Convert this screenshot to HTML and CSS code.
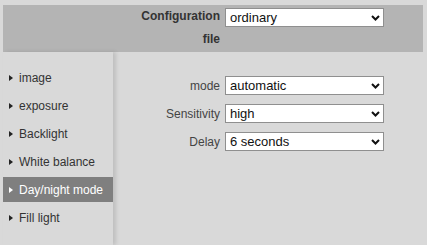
FILE: index.html
```html
<!DOCTYPE html>
<html lang="en">
<head>
  <meta charset="UTF-8" />
  <title>Day/night mode</title>
  <link rel="stylesheet" href="styles.css">
</head>
<body>
  <div class="config-bar">
    <label class="config-label">Configuration file</label>
    <span class="select-wrap top-select">
      <select>
        <option>ordinary</option>
      </select>
      <svg class="chev" width="9" height="6" viewBox="0 0 9 6"><path d="M1 1 L4.5 4.5 L8 1" fill="none" stroke="#111" stroke-width="2"/></svg>
    </span>
  </div>

  <div class="content">
    <ul class="side-menu">
      <li><span class="tri"></span>image</li>
      <li><span class="tri"></span>exposure</li>
      <li><span class="tri"></span>Backlight</li>
      <li><span class="tri"></span>White balance</li>
      <li class="active"><span class="tri"></span>Day/night mode</li>
      <li><span class="tri"></span>Fill light</li>
    </ul>

    <div class="panel">
      <div class="form-grid">
        <label>mode</label>
        <span class="select-wrap">
          <select><option>automatic</option></select>
          <svg class="chev" width="9" height="6" viewBox="0 0 9 6"><path d="M1 1 L4.5 4.5 L8 1" fill="none" stroke="#111" stroke-width="2"/></svg>
        </span>

        <label>Sensitivity</label>
        <span class="select-wrap">
          <select><option>high</option></select>
          <svg class="chev" width="9" height="6" viewBox="0 0 9 6"><path d="M1 1 L4.5 4.5 L8 1" fill="none" stroke="#111" stroke-width="2"/></svg>
        </span>

        <label>Delay</label>
        <span class="select-wrap">
          <select><option>6 seconds</option></select>
          <svg class="chev" width="9" height="6" viewBox="0 0 9 6"><path d="M1 1 L4.5 4.5 L8 1" fill="none" stroke="#111" stroke-width="2"/></svg>
        </span>
      </div>
    </div>
  </div>
</body>
</html>
```

FILE: styles.css
```css
body {
  margin: 0;
  padding: 5px 4px 0 3px;
  height: 240px;
  overflow: hidden;
  background: #d9d9d9;
  font-family: "Liberation Sans", Arial, sans-serif;
  font-size: 12px;
  color: #333;
}

/* top bar */
.config-bar {
  display: flex;
  align-items: flex-start;
  height: 47px;
  padding-left: 137px;
  background: #b4b4b4;
}

.config-label {
  width: 80px;
  text-align: right;
  font-weight: bold;
  line-height: 23px;
  color: #333;
}

.top-select {
  margin-left: 5px;
  margin-top: 3px;
}

/* selects */
.select-wrap {
  position: relative;
  display: block;
  width: 159px;
  height: 19px;
}

.select-wrap select {
  appearance: none;
  -webkit-appearance: none;
  box-sizing: border-box;
  width: 100%;
  height: 19px;
  margin: 0;
  padding: 0 0 0 4px;
  border: 1px solid #8f8f8f;
  border-radius: 0;
  background: #fff;
  font-family: "Liberation Sans", Arial, sans-serif;
  font-size: 13px;
  color: #111;
  outline: none;
}

.select-wrap .chev {
  position: absolute;
  right: 4px;
  top: 7px;
  pointer-events: none;
}

/* body */
.content {
  display: flex;
  height: 193px;
}

.side-menu {
  list-style: none;
  margin: 0;
  padding: 13px 0 0;
  width: 110px;
  box-shadow: 3px 0 4px rgba(0, 0, 0, 0.12);
}

.side-menu li {
  display: flex;
  align-items: center;
  height: 25px;
  margin-bottom: 3px;
  padding-left: 6px;
  color: #333;
}

.side-menu li.active {
  background: #7f7f7f;
  color: #fff;
}

.tri {
  width: 0;
  height: 0;
  margin-right: 6px;
  border-top: 3px solid transparent;
  border-bottom: 3px solid transparent;
  border-left: 4px solid #222;
}

.side-menu li.active .tri {
  border-left-color: #fff;
}

.panel {
  flex: 1;
  padding-top: 24px;
}

.form-grid {
  display: grid;
  grid-template-columns: 107px 159px;
  column-gap: 5px;
  row-gap: 9px;
  align-items: center;
}

.form-grid label {
  text-align: right;
  color: #444;
}
```
